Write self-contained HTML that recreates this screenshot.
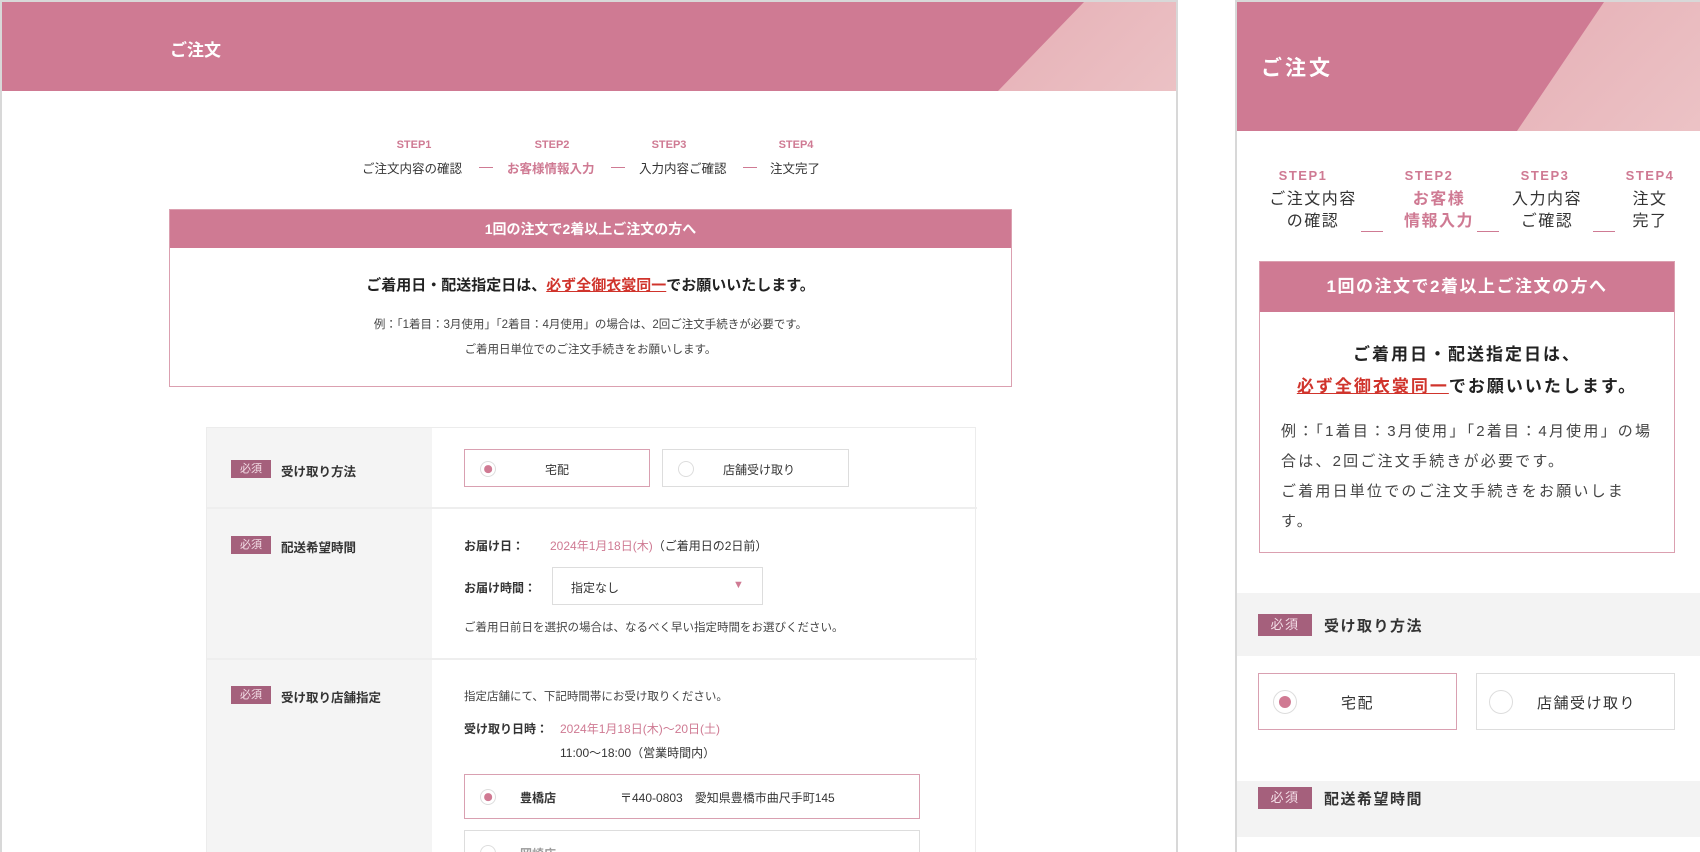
<!DOCTYPE html>
<html><head><meta charset="utf-8"><style>
*{margin:0;padding:0;box-sizing:border-box}
body{width:1700px;height:852px;background:#fff;position:relative;overflow:hidden;font-family:"Liberation Sans","Noto Sans CJK JP",sans-serif;color:#333}
.a{position:absolute;white-space:nowrap}
.pk{color:#cf7a93}
.badge{position:absolute;background:#a5607c;color:#f3dde6;font-size:11px;text-align:center}
.rad{position:absolute;border-radius:50%;border:1px solid #ddd;background:#fff}
.rad.on::after{content:"";position:absolute;left:50%;top:50%;width:55%;height:55%;border-radius:50%;background:#d07a93;transform:translate(-50%,-50%)}
.rp{letter-spacing:1.5px}
</style></head><body>
<div class="a" style="left:0;top:0;width:1178px;height:852px;border:2px solid #d8d8d8;border-bottom:none;overflow:hidden">
 <div class="a" style="left:0;top:0;width:1176px;height:89px;background:#cf7a93;overflow:hidden">
  <div class="a" style="left:996px;top:0;width:200px;height:89px;background:linear-gradient(135deg,#e6b0b6,#ecc3c6);clip-path:polygon(86px 0,200px 0,200px 89px,0 89px)"></div>
  <div class="a" style="left:168px;top:34px;color:#fff;font-size:17px;font-weight:bold">ご注文</div>
 </div>
 <div class="a pk" style="left:392px;top:137px;font-size:11px;font-weight:bold;width:40px;text-align:center">STEP1</div>
 <div class="a pk" style="left:530px;top:137px;font-size:11px;font-weight:bold;width:40px;text-align:center">STEP2</div>
 <div class="a pk" style="left:647px;top:137px;font-size:11px;font-weight:bold;width:40px;text-align:center">STEP3</div>
 <div class="a pk" style="left:774px;top:137px;font-size:11px;font-weight:bold;width:40px;text-align:center">STEP4</div>
 <div class="a" style="left:360px;top:156px;font-size:12.5px">ご注文内容の確認</div>
 <div class="a" style="left:477px;top:165px;width:14px;height:1px;background:#cf7a93"></div>
 <div class="a pk" style="left:505px;top:156px;font-size:12.5px;font-weight:bold">お客様情報入力</div>
 <div class="a" style="left:609px;top:165px;width:14px;height:1px;background:#cf7a93"></div>
 <div class="a" style="left:637px;top:156px;font-size:12.5px">入力内容ご確認</div>
 <div class="a" style="left:741px;top:165px;width:14px;height:1px;background:#cf7a93"></div>
 <div class="a" style="left:768px;top:156px;font-size:12.5px">注文完了</div>
 <div class="a" style="left:167px;top:207px;width:843px;height:178px;border:1px solid #dba0b0">
  <div class="a" style="left:0;top:0;width:841px;height:38px;background:#cf7a93;color:#fff;font-size:14px;font-weight:bold;text-align:center;line-height:38px">1回の注文で2着以上ご注文の方へ</div>
  <div class="a" style="left:0;top:64px;width:841px;text-align:center;font-size:15px;font-weight:bold;color:#222">ご着用日・配送指定日は、<span style="color:#d0342c;text-decoration:underline">必ず全御衣裳同一</span>でお願いいたします。</div>
  <div class="a" style="left:0;top:106px;width:841px;text-align:center;font-size:11.5px;color:#444">例：「1着目：3月使用」「2着目：4月使用」の場合は、2回ご注文手続きが必要です。</div>
  <div class="a" style="left:0;top:131px;width:841px;text-align:center;font-size:11.5px;color:#444">ご着用日単位でのご注文手続きをお願いします。</div>
 </div>
 <div class="a" style="left:204px;top:425px;width:770px;height:430px;border:1px solid #ececec;background:#fff">
  <div class="a" style="left:0;top:0;width:225px;height:430px;background:#f4f4f4"></div>
  <div class="a" style="left:0;top:79px;width:770px;height:2px;background:#eee"></div>
  <div class="a" style="left:0;top:230px;width:770px;height:2px;background:#eee"></div>
 </div>
 <div class="badge" style="left:229px;top:458px;width:40px;height:18px;line-height:18px">必須</div>
 <div class="a" style="left:279px;top:459px;font-size:12.5px;font-weight:bold">受け取り方法</div>
 <div class="a" style="left:462px;top:447px;width:186px;height:38px;border:1px solid #d9a0b1"><div class="rad on" style="left:15px;top:11px;width:16px;height:16px"></div><div class="a" style="left:80px;top:11px;font-size:12px">宅配</div></div>
 <div class="a" style="left:660px;top:447px;width:187px;height:38px;border:1px solid #ddd"><div class="rad" style="left:15px;top:11px;width:16px;height:16px"></div><div class="a" style="left:60px;top:11px;font-size:12px">店舗受け取り</div></div>
 <div class="badge" style="left:229px;top:534px;width:40px;height:18px;line-height:18px">必須</div>
 <div class="a" style="left:279px;top:535px;font-size:12.5px;font-weight:bold">配送希望時間</div>
 <div class="a" style="left:462px;top:535px;font-size:12px;font-weight:bold">お届け日：</div>
 <div class="a" style="left:548px;top:535px;font-size:12px"><span class="pk">2024年1月18日(木)</span>（ご着用日の2日前）</div>
 <div class="a" style="left:462px;top:577px;font-size:12px;font-weight:bold">お届け時間：</div>
 <div class="a" style="left:550px;top:565px;width:211px;height:38px;border:1px solid #ddd"><div class="a" style="left:18px;top:11px;font-size:12px">指定なし</div><div class="a pk" style="left:180px;top:11px;font-size:11px">▼</div></div>
 <div class="a" style="left:462px;top:617px;font-size:11.5px;color:#444">ご着用日前日を選択の場合は、なるべく早い指定時間をお選びください。</div>
 <div class="badge" style="left:229px;top:684px;width:40px;height:18px;line-height:18px">必須</div>
 <div class="a" style="left:279px;top:685px;font-size:12.5px;font-weight:bold">受け取り店舗指定</div>
 <div class="a" style="left:462px;top:686px;font-size:11.5px;color:#444">指定店舗にて、下記時間帯にお受け取りください。</div>
 <div class="a" style="left:462px;top:718px;font-size:12px;font-weight:bold">受け取り日時：</div>
 <div class="a pk" style="left:558px;top:718px;font-size:12px">2024年1月18日(木)〜20日(土)</div>
 <div class="a" style="left:558px;top:742px;font-size:12px">11:00〜18:00（営業時間内）</div>
 <div class="a" style="left:462px;top:772px;width:456px;height:45px;border:1px solid #d9a0b1"><div class="rad on" style="left:15px;top:14px;width:16px;height:16px"></div><div class="a" style="left:55px;top:14px;font-size:12px;font-weight:bold">豊橋店</div><div class="a" style="left:155px;top:14px;font-size:12px">〒440-0803　愛知県豊橋市曲尺手町145</div></div>
 <div class="a" style="left:462px;top:828px;width:456px;height:45px;border:1px solid #ddd"><div class="rad" style="left:15px;top:14px;width:16px;height:16px"></div><div class="a" style="left:55px;top:14px;font-size:12px;font-weight:bold;color:#999">岡崎店</div></div>
</div>
<div class="a rp" style="left:1235px;top:0;width:465px;height:852px;border-left:2px solid #d8d8d8;border-top:2px solid #d8d8d8;overflow:hidden">
 <div class="a" style="left:0;top:0;width:463px;height:129px;background:#cf7a93;overflow:hidden">
  <div class="a" style="left:280px;top:0;width:190px;height:129px;background:linear-gradient(135deg,#e6b0b6,#ecc3c6);clip-path:polygon(87px 0,190px 0,190px 129px,0 129px)"></div>
  <div class="a" style="left:24px;top:50px;color:#fff;font-size:21px;font-weight:bold;letter-spacing:3px">ご注文</div>
 </div>
 <div class="a pk" style="left:36px;top:166px;width:60px;text-align:center;font-size:13px;font-weight:bold">STEP1</div>
 <div class="a pk" style="left:162px;top:166px;width:60px;text-align:center;font-size:13px;font-weight:bold">STEP2</div>
 <div class="a pk" style="left:278px;top:166px;width:60px;text-align:center;font-size:13px;font-weight:bold">STEP3</div>
 <div class="a pk" style="left:383px;top:166px;width:60px;text-align:center;font-size:13px;font-weight:bold">STEP4</div>
 <div class="a" style="left:6px;top:187px;width:140px;text-align:center;font-size:16px;line-height:22px">ご注文内容<br>の確認</div>
 <div class="a pk" style="left:132px;top:187px;width:140px;text-align:center;font-size:16px;line-height:22px;font-weight:bold">お客様<br>情報入力</div>
 <div class="a" style="left:240px;top:187px;width:140px;text-align:center;font-size:16px;line-height:22px">入力内容<br>ご確認</div>
 <div class="a" style="left:373px;top:187px;width:80px;text-align:center;font-size:16px;line-height:22px">注文<br>完了</div>
 <div class="a" style="left:124px;top:229px;width:22px;height:1px;background:#cf7a93"></div>
 <div class="a" style="left:240px;top:229px;width:22px;height:1px;background:#cf7a93"></div>
 <div class="a" style="left:356px;top:229px;width:22px;height:1px;background:#cf7a93"></div>
 <div class="a" style="left:22px;top:259px;width:416px;height:292px;border:1px solid #dba0b0">
  <div class="a" style="left:0;top:0;width:414px;height:50px;background:#cf7a93;color:#fff;font-size:17px;font-weight:bold;text-align:center;line-height:50px">1回の注文で2着以上ご注文の方へ</div>
  <div class="a" style="left:0;top:77px;width:414px;text-align:center;font-size:17px;font-weight:bold;color:#222;line-height:32px;letter-spacing:2px">ご着用日・配送指定日は、<br><span style="color:#d0342c;text-decoration:underline">必ず全御衣裳同一</span>でお願いいたします。</div>
  <div class="a" style="left:21px;top:155px;font-size:15px;color:#444;line-height:30px;white-space:normal;width:372px;letter-spacing:2.2px">例：「1着目：3月使用」「2着目：4月使用」の場合は、2回ご注文手続きが必要です。<br>ご着用日単位でのご注文手続きをお願いします。</div>
 </div>
 <div class="a" style="left:0;top:591px;width:463px;height:63px;background:#f3f3f3"></div>
 <div class="badge" style="left:21px;top:612px;width:54px;height:22px;line-height:22px;font-size:13px">必須</div>
 <div class="a" style="left:87px;top:613px;font-size:15px;font-weight:bold">受け取り方法</div>
 <div class="a" style="left:21px;top:671px;width:199px;height:57px;border:1px solid #d9a0b1"><div class="rad on" style="left:14px;top:16px;width:24px;height:24px"></div><div class="a" style="left:82px;top:18px;font-size:15px">宅配</div></div>
 <div class="a" style="left:239px;top:671px;width:199px;height:57px;border:1px solid #ddd"><div class="rad" style="left:12px;top:16px;width:24px;height:24px"></div><div class="a" style="left:60px;top:18px;font-size:15px">店舗受け取り</div></div>
 <div class="a" style="left:0;top:779px;width:463px;height:56px;background:#f3f3f3"></div>
 <div class="badge" style="left:21px;top:785px;width:54px;height:22px;line-height:22px;font-size:13px">必須</div>
 <div class="a" style="left:87px;top:786px;font-size:15px;font-weight:bold">配送希望時間</div>
</div>
</body></html>
